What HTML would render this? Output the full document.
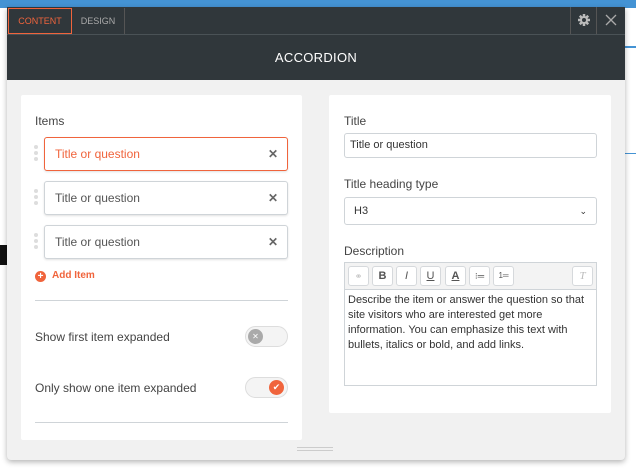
<!DOCTYPE html>
<html><head><style>
*{box-sizing:border-box;margin:0;padding:0}
body{width:636px;height:468px;overflow:hidden;background:#fff;font-family:"Liberation Sans",sans-serif;position:relative}
.abs{position:absolute}
.dlg{left:7px;top:7px;width:618px;height:453px;background:#f1f1f1;box-shadow:0 2px 6px rgba(0,0,0,.3);border-radius:0 0 4px 4px}
.tabs{left:0;top:0;width:618px;height:28px;background:#30373b;border-bottom:1px solid #4a5256}
.hdr{left:0;top:28px;width:618px;height:45px;background:#30373b;color:#fff;font-size:13px;text-align:center;line-height:45px;letter-spacing:.3px}
.card{background:#fff;border-radius:2px}
.lbl{font-size:12px;color:#444}
.item{left:23px;width:244px;height:34px;border:1px solid #cfd4d8;border-radius:3px;background:#fff;box-shadow:0 1px 2px rgba(0,0,0,.12);font-size:12px;color:#555;line-height:32px;padding-left:10px}
.item .x{position:absolute;right:9px;top:0;font-size:12px;color:#666;font-weight:bold}
.dots{left:13px;width:4px}
.dots i{display:block;width:4px;height:4px;border-radius:2px;background:#ddd;margin-bottom:2px}
.inp{border:1px solid #cfd4d8;border-radius:3px;background:#fff;font-size:11px;color:#333;padding-left:5px}
.tb{top:3px;width:21px;height:20px;border:1px solid #d6d9dc;border-radius:3px;background:#fff;font-size:11px;color:#555;text-align:center;line-height:18px}
</style></head><body>
<div class="abs" style="left:0;top:0;width:636px;height:8px;background:#4493d4"></div>
<div class="abs" style="left:625px;top:46px;width:11px;height:2px;background:#4493d4"></div>
<div class="abs" style="left:625px;top:153px;width:11px;height:1px;background:#4493d4"></div>
<div class="abs" style="left:0;top:245px;width:7px;height:20px;background:#111"></div>
<div class="abs dlg">
 <div class="abs tabs">
  <div class="abs" style="left:1px;top:1px;width:64px;height:26px;border:1px solid #f0643c;color:#f0643c;font-size:9px;line-height:24px;text-align:center">CONTENT</div>
  <div class="abs" style="left:65px;top:1px;width:53px;height:26px;border-right:1px solid #555;color:#aaa;font-size:9px;line-height:26px;text-align:center">DESIGN</div>
  <div class="abs" style="left:563px;top:0;width:27px;height:27px;border-left:1px solid #555;border-right:1px solid #555"><svg width="27" height="27"><g stroke="#bbb" stroke-width="2.5"><path d="M13 7v12M7 13h12M8.8 8.8l8.4 8.4M17.2 8.8l-8.4 8.4"/></g><circle cx="13" cy="13" r="4" fill="#bbb"/><circle cx="13" cy="13" r="2" fill="#30373b"/></svg></div>
  <div class="abs" style="left:590px;top:0;width:28px;height:27px"><svg width="28" height="27"><path d="M9 8l10 10M19 8l-10 10" stroke="#aaa" stroke-width="1.3"/></svg></div>
 </div>
 <div class="abs hdr">ACCORDION</div>
 <div class="abs card" style="left:14px;top:88px;width:281px;height:345px">
  <div class="abs lbl" style="left:14px;top:19px">Items</div>
  <div class="abs dots" style="top:50px"><i></i><i></i><i></i></div>
  <div class="abs item" style="top:42px;border-color:#f0643c;color:#f0643c">Title or question<span class="x">✕</span></div>
  <div class="abs dots" style="top:94px"><i></i><i></i><i></i></div>
  <div class="abs item" style="top:86px">Title or question<span class="x">✕</span></div>
  <div class="abs dots" style="top:138px"><i></i><i></i><i></i></div>
  <div class="abs item" style="top:130px">Title or question<span class="x">✕</span></div>
  <div class="abs" style="left:14px;top:176px;width:11px;height:11px;border-radius:6px;background:#f0643c;color:#fff;font-size:10px;line-height:11px;text-align:center;font-weight:bold">+</div>
  <div class="abs" style="left:31px;top:175px;font-size:10px;color:#f0643c;font-weight:bold">Add Item</div>
  <div class="abs" style="left:14px;top:205px;width:253px;height:1px;background:#cfd4d8"></div>
  <div class="abs lbl" style="left:14px;top:235px">Show first item expanded</div>
  <div class="abs" style="left:224px;top:231px;width:43px;height:21px;border-radius:11px;background:#f4f4f4;border:1px solid #ddd"></div>
  <div class="abs" style="left:227px;top:234px;width:15px;height:15px;border-radius:8px;background:#aaa;color:#fff;font-size:8px;text-align:center;line-height:15px">✕</div>
  <div class="abs lbl" style="left:14px;top:286px">Only show one item expanded</div>
  <div class="abs" style="left:224px;top:282px;width:43px;height:21px;border-radius:11px;background:#f4f4f4;border:1px solid #ddd"></div>
  <div class="abs" style="left:248px;top:285px;width:15px;height:15px;border-radius:8px;background:#f0643c;color:#fff;font-size:9px;text-align:center;line-height:15px">✔</div>
  <div class="abs" style="left:14px;top:327px;width:253px;height:1px;background:#cfd4d8"></div>
 </div>
 <div class="abs card" style="left:322px;top:88px;width:282px;height:318px">
  <div class="abs lbl" style="left:15px;top:19px">Title</div>
  <div class="abs inp" style="left:15px;top:38px;width:253px;height:25px;line-height:23px">Title or question</div>
  <div class="abs lbl" style="left:15px;top:82px">Title heading type</div>
  <div class="abs inp" style="left:15px;top:102px;width:253px;height:28px;line-height:26px;padding-left:9px">H3<span style="position:absolute;right:9px;top:0;font-size:9px">⌄</span></div>
  <div class="abs lbl" style="left:15px;top:149px">Description</div>
  <div class="abs" style="left:15px;top:167px;width:253px;height:124px;border:1px solid #cfd4d8;background:#fff">
   <div class="abs" style="left:0;top:0;width:251px;height:27px;background:#f3f3f3;border-bottom:1px solid #cfd4d8">
    <div class="abs tb" style="left:3px;color:#bbb;font-size:9px">⚭</div>
    <div class="abs tb" style="left:27px;font-weight:bold">B</div>
    <div class="abs tb" style="left:51px;font-style:italic">I</div>
    <div class="abs tb" style="left:75px;text-decoration:underline">U</div>
    <div class="abs tb" style="left:100px;text-decoration:underline;font-weight:bold">A</div>
    <div class="abs tb" style="left:124px;font-size:9px">⁝═</div>
    <div class="abs tb" style="left:148px;font-size:8px">1═</div>
    <div class="abs tb" style="left:227px;color:#bbb;font-style:italic;font-family:'Liberation Serif',serif">T</div>
   </div>
   <div class="abs" style="left:3px;top:30px;width:248px;font-size:11px;line-height:15px;color:#333">Describe the item or answer the question so that site visitors who are interested get more information. You can emphasize this text with bullets, italics or bold, and add links.</div>
  </div>
 </div>
 <div class="abs" style="left:290px;top:440px;width:36px;height:4px;border-top:1px solid #ccc;border-bottom:1px solid #ccc"></div>
</div>
</body></html>
